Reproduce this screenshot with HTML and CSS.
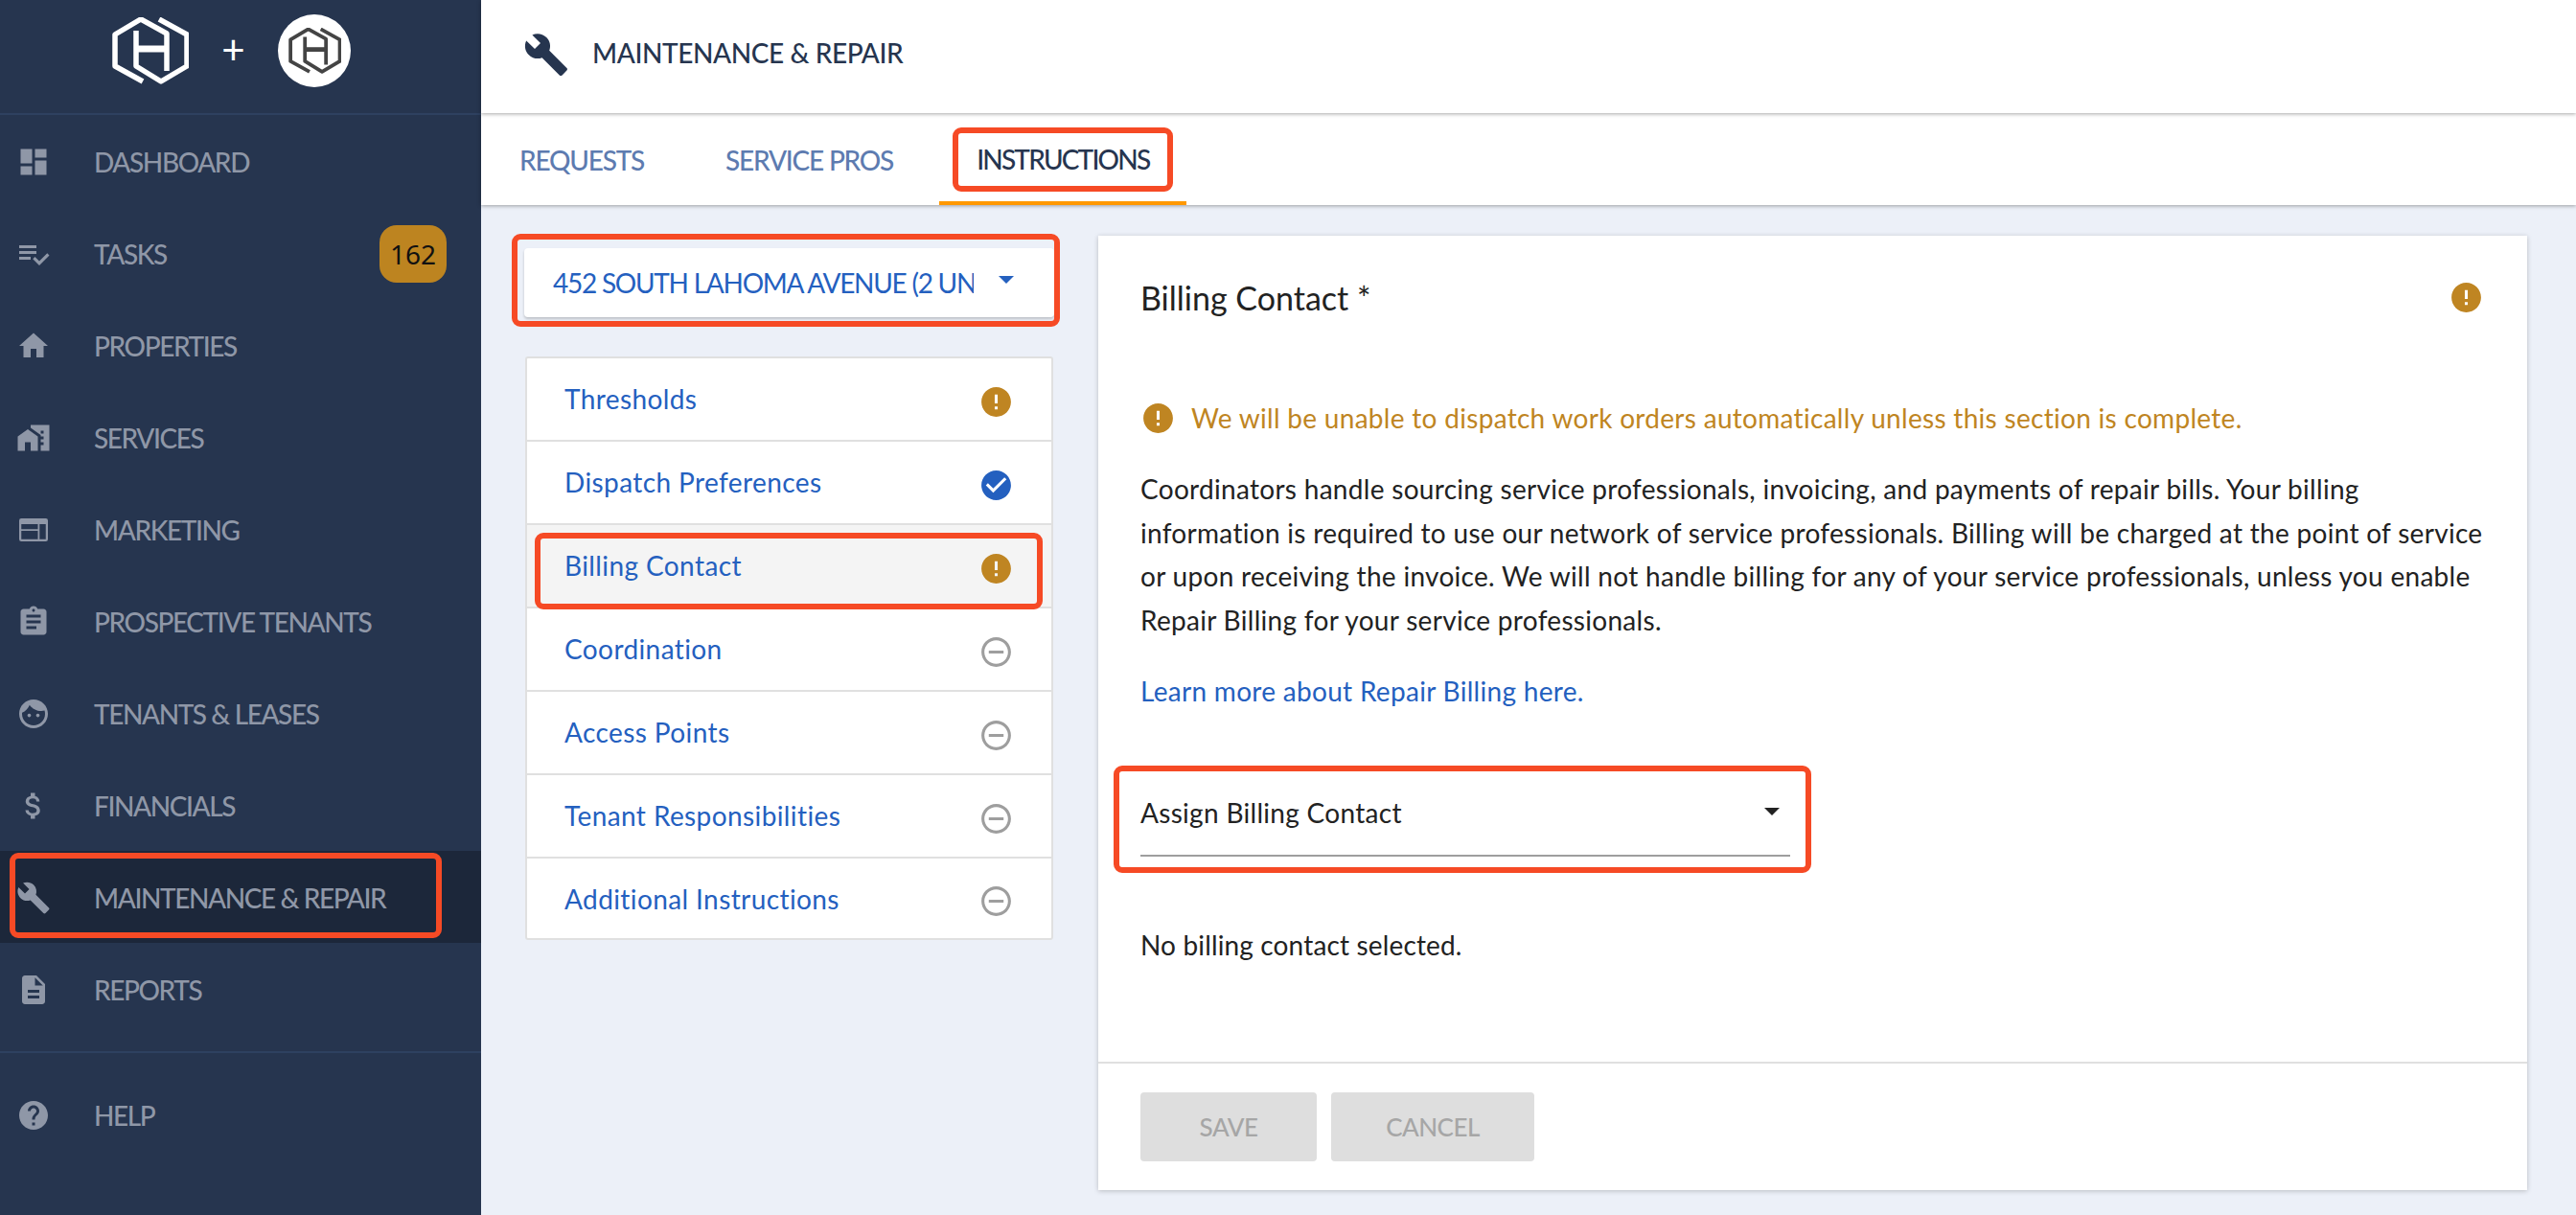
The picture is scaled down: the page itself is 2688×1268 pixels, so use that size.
FILE: index.html
```html
<!DOCTYPE html>
<html lang="en">
<head>
    <meta charset="UTF-8">
    <meta name="viewport" content="width=device-width, initial-scale=1.0">
    <title>Maintenance &amp; Repair</title>
    <link rel="stylesheet" href="styles.css">
</head>
<body>
    <svg class="defs" width="0" height="0">
        <symbol id="logo" viewBox="0 0 80 70">
            <g fill="none" stroke="currentColor" stroke-width="5.500" stroke-linejoin="round">
                <path d="M32 67L3 51V18L30 2L57 17V56"/>
                <path d="M49 2L78 18V51L51 67L25 51V14"/>
                <path d="M25 33H57" stroke-width="7"/>
            </g>
        </symbol>
        <symbol id="i-error" viewBox="0 0 24 24"><path d="M12 2C6.48 2 2 6.48 2 12s4.48 10 10 10 10-4.48 10-10S17.52 2 12 2zm1 15h-2v-2h2v2zm0-4h-2V7h2v6z"/></symbol>
        <symbol id="i-check" viewBox="0 0 24 24"><path d="M12 2C6.48 2 2 6.48 2 12s4.48 10 10 10 10-4.48 10-10S17.52 2 12 2zm-2 15l-5-5 1.41-1.41L10 14.17l7.59-7.59L19 8l-9 9z"/></symbol>
        <symbol id="i-minus" viewBox="0 0 24 24"><path d="M7 11v2h10v-2H7zm5-9C6.48 2 2 6.48 2 12s4.48 10 10 10 10-4.48 10-10S17.52 2 12 2zm0 18c-4.41 0-8-3.59-8-8s3.59-8 8-8 8 3.59 8 8-3.59 8-8 8z"/></symbol>
        <symbol id="i-build" viewBox="0 0 24 24"><path d="M22.7 19l-9.1-9.1c.9-2.3.4-5-1.5-6.9-2-2-5-2.4-7.4-1.3L9 6 6 9 1.6 4.7C.4 7.1.9 10.1 2.9 12.1c1.9 1.9 4.6 2.4 6.9 1.5l9.1 9.1c.4.4 1 .4 1.4 0l2.3-2.3c.5-.4.5-1.1.1-1.4z"/></symbol>
    </svg>

    <div class="app">
        <aside class="sidebar">
            <div class="brand">
                <svg class="brand-logo"><use href="#logo"/></svg>
                <span class="brand-plus">+</span>
                <span class="brand-circle"><svg class="brand-logo-small"><use href="#logo"/></svg></span>
            </div>
            <nav class="nav">
                <a class="nav-item"><svg class="nav-icon" viewBox="0 0 24 24"><path d="M3 13h8V3H3v10zm0 8h8v-6H3v6zm10 0h8V11h-8v10zm0-18v6h8V3h-8z"/></svg>DASHBOARD</a>
                <a class="nav-item"><svg class="nav-icon" viewBox="0 0 24 24"><path d="M14 10H2v2h12v-2zm0-4H2v2h12V6zM2 16h8v-2H2v2zm19.5-4.5L23 13l-6.99 7-4.51-4.5L13 14l3.01 3 5.49-5.5z"/></svg>TASKS<span class="badge">162</span></a>
                <a class="nav-item"><svg class="nav-icon" viewBox="0 0 24 24"><path d="M10 20v-6h4v6h5v-8h3L12 3 2 12h3v8z"/></svg>PROPERTIES</a>
                <a class="nav-item"><svg class="nav-icon" viewBox="0 0 24 24"><path d="M1 11v10h5v-6h4v6h5V11L8 6z"/><path d="M10 3v1.97l7 5V11h2v2h-2v2h2v2h-2v4h6V3H10zm9 6h-2V7h2v2z"/></svg>SERVICES</a>
                <a class="nav-item"><svg class="nav-icon" viewBox="0 0 24 24"><path fill-rule="evenodd" d="M3.5 4h17A1.5 1.5 0 0 1 22 5.500v13a1.500 1.500 0 0 1-1.500 1.500h-17A1.500 1.500 0 0 1 2 18.500v-13A1.500 1.500 0 0 1 3.500 4zM3.500 8v3.500H15V8zm0 4.700v5.800H15v-5.800zM16.200 8v10.500h4.300V8z"/></svg>MARKETING</a>
                <a class="nav-item"><svg class="nav-icon" viewBox="0 0 24 24"><path d="M19 3h-4.180C14.400 1.840 13.300 1 12 1c-1.300 0-2.400.84-2.820 2H5c-1.100 0-2 .9-2 2v14c0 1.100.9 2 2 2h14c1.100 0 2-.9 2-2V5c0-1.100-.9-2-2-2zm-7 0c.55 0 1 .45 1 1s-.45 1-1 1-1-.45-1-1 .45-1 1-1zm2 14H7v-2h7v2zm3-4H7v-2h10v2zm0-4H7V7h10v2z"/></svg>PROSPECTIVE TENANTS</a>
                <a class="nav-item"><svg class="nav-icon" viewBox="0 0 24 24"><path d="M9 11.750c-.69 0-1.250.56-1.250 1.250s.56 1.250 1.250 1.250 1.250-.56 1.250-1.250-.56-1.250-1.250-1.250zm6 0c-.69 0-1.250.56-1.250 1.250s.56 1.250 1.250 1.250 1.250-.56 1.250-1.250-.56-1.250-1.250-1.250zM12 2C6.480 2 2 6.480 2 12s4.480 10 10 10 10-4.480 10-10S17.520 2 12 2zm0 18c-4.410 0-8-3.590-8-8 0-.29.02-.58.05-.86 2.360-1.050 4.230-2.980 5.210-5.370C11.070 8.330 14.050 10 17.420 10c.78 0 1.530-.09 2.250-.26.21.71.33 1.470.33 2.260 0 4.410-3.590 8-8 8z"/></svg>TENANTS &amp; LEASES</a>
                <a class="nav-item"><svg class="nav-icon" viewBox="0 0 24 24"><path d="M11.800 10.900c-2.270-.59-3-1.200-3-2.150 0-1.090 1.010-1.850 2.700-1.850 1.780 0 2.440.85 2.500 2.100h2.210c-.07-1.720-1.120-3.300-3.210-3.810V3h-3v2.160c-1.940.42-3.500 1.680-3.500 3.610 0 2.310 1.910 3.460 4.700 4.130 2.500.6 3 1.480 3 2.410 0 .69-.49 1.790-2.700 1.790-2.060 0-2.870-.92-2.980-2.100h-2.200c.12 2.190 1.760 3.420 3.680 3.830V21h3v-2.150c1.950-.37 3.500-1.500 3.500-3.550 0-2.840-2.430-3.810-4.700-4.400z"/></svg>FINANCIALS</a>
                <a class="nav-item active"><svg class="nav-icon"><use href="#i-build"/></svg>MAINTENANCE &amp; REPAIR</a>
                <a class="nav-item"><svg class="nav-icon" viewBox="0 0 24 24"><path d="M14 2H6c-1.100 0-1.990.9-1.990 2L4 20c0 1.100.89 2 1.990 2H18c1.100 0 2-.9 2-2V8l-6-6zm2 16H8v-2h8v2zm0-4H8v-2h8v2zm-3-5V3.500L18.500 9H13z"/></svg>REPORTS</a>
            </nav>
            <div class="nav-bottom">
                <a class="nav-item"><svg class="nav-icon" viewBox="0 0 24 24"><path d="M12 2C6.480 2 2 6.480 2 12s4.480 10 10 10 10-4.480 10-10S17.520 2 12 2zm1 17h-2v-2h2v2zm2.070-7.750l-.9.92C13.450 12.900 13 13.500 13 15h-2v-.5c0-1.100.45-2.100 1.170-2.830l1.240-1.260c.37-.36.59-.86.59-1.410 0-1.100-.9-2-2-2s-2 .9-2 2H8c0-2.210 1.790-4 4-4s4 1.790 4 4c0 .88-.36 1.680-.93 2.250z"/></svg>HELP</a>
            </div>
        </aside>

        <main class="main">
            <header class="page-head">
                <svg class="page-icon"><use href="#i-build"/></svg>
                <h1>MAINTENANCE &amp; REPAIR</h1>
            </header>
            <div class="tabs">
                <a class="tab tab-requests">REQUESTS</a>
                <a class="tab tab-pros">SERVICE PROS</a>
                <a class="tab tab-instructions active">INSTRUCTIONS</a>
            </div>
            <div class="content">
                <div class="left-col">
                    <div class="property-select">
                        <span class="property-name">452 SOUTH LAHOMA AVENUE (2 UNITS)</span>
                        <span class="caret caret-blue"></span>
                    </div>
                    <ul class="section-list">
                        <li class="section-row"><a>Thresholds</a><svg class="status warn"><use href="#i-error"/></svg></li>
                        <li class="section-row"><a>Dispatch Preferences</a><svg class="status done"><use href="#i-check"/></svg></li>
                        <li class="section-row current"><a>Billing Contact</a><svg class="status warn"><use href="#i-error"/></svg></li>
                        <li class="section-row"><a>Coordination</a><svg class="status todo"><use href="#i-minus"/></svg></li>
                        <li class="section-row"><a>Access Points</a><svg class="status todo"><use href="#i-minus"/></svg></li>
                        <li class="section-row"><a>Tenant Responsibilities</a><svg class="status todo"><use href="#i-minus"/></svg></li>
                        <li class="section-row"><a>Additional Instructions</a><svg class="status todo"><use href="#i-minus"/></svg></li>
                    </ul>
                </div>

                <section class="card">
                    <div class="card-head">
                        <h2>Billing Contact *</h2>
                        <svg class="status warn"><use href="#i-error"/></svg>
                    </div>
                    <div class="card-body">
                        <div class="warning">
                            <svg class="status warn"><use href="#i-error"/></svg>
                            <span>We will be unable to dispatch work orders automatically unless this section is complete.</span>
                        </div>
                        <p class="intro">Coordinators handle sourcing service professionals, invoicing, and payments of repair bills. Your billing information is required to use our network of service professionals. Billing will be charged at the point of service or upon receiving the invoice. We will not handle billing for any of your service professionals, unless you enable Repair Billing for your service professionals.</p>
                        <p class="learn"><a>Learn more about Repair Billing here.</a></p>
                        <div class="contact-select">
                            <span>Assign Billing Contact</span>
                            <span class="caret"></span>
                        </div>
                        <p class="no-contact">No billing contact selected.</p>
                    </div>
                    <div class="card-foot">
                        <button class="btn btn-save" disabled>SAVE</button>
                        <button class="btn btn-cancel" disabled>CANCEL</button>
                    </div>
                </section>
            </div>
        </main>
    </div>

    <!-- red callouts drawn over the screenshot -->
    <div class="mark mark-nav"></div>
    <div class="mark mark-tab"></div>
    <div class="mark mark-property"></div>
    <div class="mark mark-row"></div>
    <div class="mark mark-select"></div>
</body>
</html>
```

FILE: styles.css
```css
* {
    box-sizing: border-box;
}
html, body {
    margin: 0;
    height: 100%;
}
body {
    font-family: Lato, "Open Sans", sans-serif;
    font-size: 28px;
    letter-spacing: 0.3px;
    color: #222;
    background: #ecf0f8;
    overflow: hidden;
}
.defs {
    position: absolute;
}
.app {
    display: flex;
    height: 1268px;
}

/* sidebar */
.sidebar {
    width: 502px;
    flex-shrink: 0;
    background: #26354f;
    color: #8f97a7;
}
.brand {
    height: 120px;
    border-bottom: 2px solid #2e4160;
    display: flex;
    align-items: center;
    padding: 0 0 12px 117px;
}
.brand-logo {
    width: 80px;
    height: 70px;
    color: #fff;
}
.brand-plus {
    width: 93px;
    text-align: center;
    color: #fff;
    font-size: 42px;
    line-height: 1;
    letter-spacing: 0;
    padding-bottom: 4px;
}
.brand-circle {
    width: 76px;
    height: 76px;
    border-radius: 50%;
    background: #fff;
    display: flex;
    align-items: center;
    justify-content: center;
}
.brand-logo-small {
    width: 55px;
    height: 48px;
    color: #444;
}
.nav-item {
    height: 96px;
    display: flex;
    align-items: center;
    padding: 1px 0 0 17px;
    letter-spacing: -1.4px;
    font-weight: 500;
}
.nav-item.active {
    background: #1c273a;
}
.nav-icon {
    width: 36px;
    height: 36px;
    margin-right: 45px;
    fill: #8f97a7;
    flex-shrink: 0;
}
.badge {
    margin-left: auto;
    margin-right: 36px;
    width: 70px;
    height: 60px;
    border-radius: 18px;
    background: #bd8420;
    color: #111;
    font-family: "Noto Sans", sans-serif;
    font-size: 28px;
    font-weight: 400;
    letter-spacing: 0;
    display: flex;
    align-items: center;
    justify-content: center;
}
.nav-bottom {
    margin-top: 17px;
    padding-top: 16px;
    border-top: 2px solid #2e4160;
}

/* main area */
.main {
    flex: 1;
    display: flex;
    flex-direction: column;
    min-width: 0;
}
.page-head {
    height: 118px;
    flex-shrink: 0;
    background: #fff;
    display: flex;
    align-items: center;
    padding: 0 0 4px 44px;
    box-shadow: 0 1px 4px rgba(0, 0, 0, 0.35);
    position: relative;
    z-index: 1;
}
.page-icon {
    width: 48px;
    height: 48px;
    fill: #26354f;
    margin-right: 24px;
}
.page-head h1 {
    margin: 0 0 4px;
    font-size: 28px;
    font-weight: 500;
    letter-spacing: -0.4px;
    color: #26354f;
}
.tabs {
    height: 96px;
    flex-shrink: 0;
    background: #fff;
    display: flex;
    box-shadow: 0 1px 4px rgba(0, 0, 0, 0.35);
    position: relative;
}
.tab {
    display: flex;
    align-items: center;
    height: 96px;
    padding-top: 2px;
    color: #5d7bb0;
    letter-spacing: -1.2px;
    font-weight: 500;
}
.tab-requests {
    margin-left: 40px;
}
.tab-pros {
    margin-left: 85px;
}
.tab.active {
    margin-left: 48px;
    padding: 3px 39px 0;
    color: #26354f;
    letter-spacing: -1.8px;
    border-bottom: 4px solid #ff9800;
}
.content {
    flex: 1;
    display: flex;
    padding: 32px 51px 26px 45px;
    gap: 44px;
    min-height: 0;
}
.left-col {
    width: 555px;
    flex-shrink: 0;
    padding-top: 13px;
}
.property-select {
    width: 553px;
    height: 72px;
    background: #fff;
    border-radius: 4px;
    box-shadow: 0 2px 3px rgba(0, 0, 0, 0.2);
    display: flex;
    align-items: center;
    padding: 0 42px 0 30px;
    margin-bottom: 41px;
    color: #2460bf;
    letter-spacing: -1.25px;
}
.property-name {
    width: 439px;
    overflow: hidden;
    white-space: nowrap;
}
.caret {
    width: 0;
    height: 0;
    border-left: 8px solid transparent;
    border-right: 8px solid transparent;
    border-top: 8px solid #222;
    margin-left: auto;
}
.caret-blue {
    border-top-color: #2460bf;
    margin-bottom: 6px;
}
.section-list {
    list-style: none;
    margin: 0 0 0 1px;
    padding: 0;
    width: 551px;
    background: #fff;
    border: 2px solid #e0e0e0;
    border-radius: 3px;
}
.section-row {
    height: 87px;
    display: flex;
    align-items: center;
    justify-content: space-between;
    padding: 0 39px 0 39px;
    color: #2460bf;
    letter-spacing: 0.4px;
    border-bottom: 2px solid #e0e0e0;
}
.section-row:last-child {
    height: 83px;
    border-bottom: none;
}
.section-row:last-child a {
    margin-top: 2px;
}
.section-row a {
    margin-bottom: 2px;
}
.section-row .status {
    margin-top: 5px;
}
.section-row.current {
    background: #f4f4f4;
}
.status {
    width: 37px;
    height: 37px;
    flex-shrink: 0;
}
.warn {
    fill: #bf8522;
}
.done {
    fill: #2460bf;
}
.todo {
    fill: #9e9e9e;
}

/* billing card */
.card {
    flex: 1;
    background: #fff;
    box-shadow: 0 1px 5px rgba(0, 0, 0, 0.22);
    display: flex;
    flex-direction: column;
    min-width: 0;
}
.card-head {
    height: 130px;
    flex-shrink: 0;
    display: flex;
    align-items: center;
    justify-content: space-between;
    padding: 0 45px 2px 44px;
}
.card-head h2 {
    margin: 0;
    font-size: 34px;
    font-weight: 400;
    letter-spacing: 0;
}
.card-body {
    flex: 1;
    padding: 37px 44px 0;
}
.warning {
    height: 46px;
    display: flex;
    align-items: center;
    color: #bf8522;
}
.warning .status {
    margin-right: 16px;
}
.intro, .learn, .no-contact {
    margin: 29px 0 0;
    line-height: 45.6px;
}
.contact-select {
    width: 678px;
    height: 69px;
    margin-top: 80px;
    border-bottom: 2px solid #9e9e9e;
    display: flex;
    align-items: flex-start;
    line-height: 46px;
}
.learn a {
    color: #2460bf;
}
.contact-select .caret {
    margin: 18px 11px 0 auto;
}
.no-contact {
    margin-top: 70px;
    letter-spacing: 0.15px;
}
.card-foot {
    height: 134px;
    flex-shrink: 0;
    border-top: 2px solid #e0e0e0;
    padding: 30px 44px 0;
    display: flex;
    gap: 15px;
    align-items: flex-start;
}
.btn {
    height: 72px;
    border: none;
    border-radius: 4px;
    background: #dedede;
    color: #a6a6a6;
    font-family: inherit;
    font-size: 26px;
    font-weight: 500;
    letter-spacing: -0.5px;
}
.btn-save {
    width: 184px;
}
.btn-cancel {
    width: 212px;
}

/* callouts */
.mark {
    position: absolute;
    border: 6px solid #f64a25;
    border-radius: 9px;
    pointer-events: none;
}
.mark-nav {
    left: 10px;
    top: 890px;
    width: 451px;
    height: 89px;
}
.mark-tab {
    left: 994px;
    top: 133px;
    width: 230px;
    height: 67px;
}
.mark-property {
    left: 534px;
    top: 244px;
    width: 572px;
    height: 97px;
}
.mark-row {
    left: 558px;
    top: 556px;
    width: 530px;
    height: 80px;
}
.mark-select {
    left: 1162px;
    top: 799px;
    width: 728px;
    height: 112px;
}
```
